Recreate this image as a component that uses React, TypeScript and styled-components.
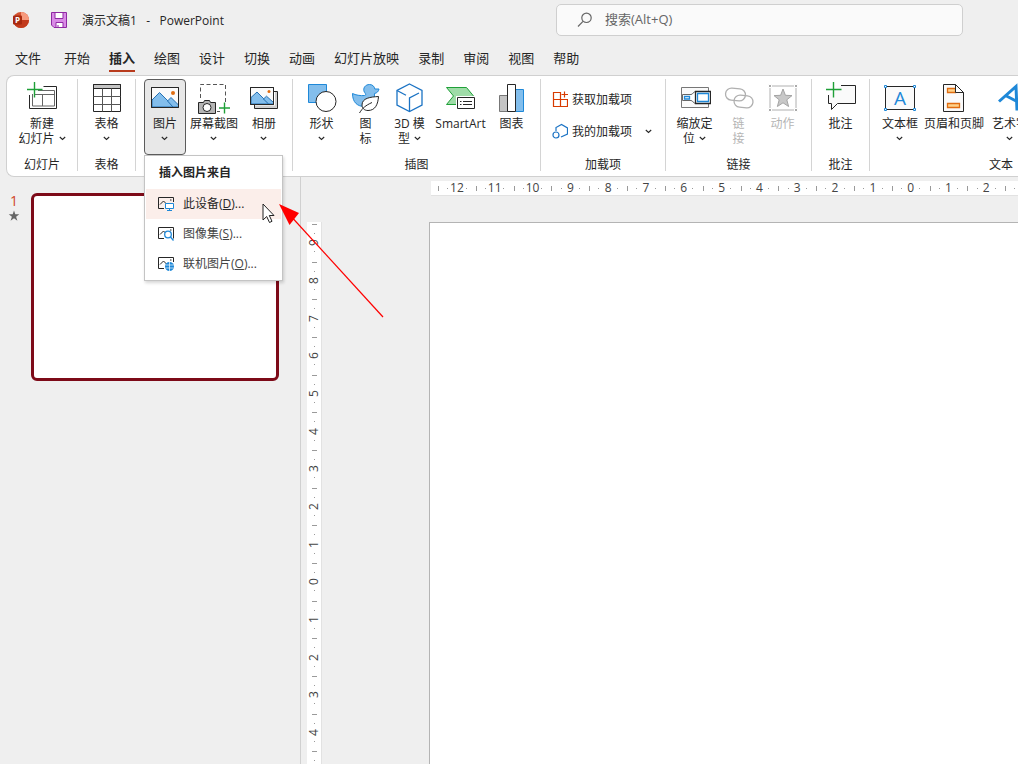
import React from "react";
import styled, { createGlobalStyle, css } from "styled-components";

const INK = "#262626";
const BLUE = "#1e88d8";
const SKY = "#83beec";
const DEEP = "#2470b3";
const GREEN = "#1fa038";
const ORANGE = "#e06c10";

const Global = createGlobalStyle`
  * { box-sizing: border-box; }
  body {
    margin: 0;
    background: #efefef;
    color: ${INK};
    font: 12px/15px "Open Sans", "Noto Sans CJK SC", sans-serif;
    overflow: hidden;
  }
  button, input { font: inherit; color: inherit; }
  button { background: none; border: 0; padding: 0; }
  svg { display: block; flex: none; }
`;

const Window = styled.div`
  display: flex;
  flex-direction: column;
  height: 100vh;
  overflow: hidden;
`;

/* Title bar */
const TitleBar = styled.header`
  display: flex;
  align-items: center;
  height: 40px;
  padding: 0 55px 0 12px;
`;
const SaveButton = styled.button`
  margin: 0 15px 0 21px;
`;
const DocTitle = styled.h1`
  margin: 0;
  font-size: 12px;
  font-weight: 400;
  white-space: pre;
`;
const Search = styled.label`
  display: flex;
  align-items: center;
  gap: 12px;
  flex: 0 0 407px;
  height: 32px;
  margin-left: auto;
  padding: 0 20px;
  border: 1px solid #cfcfcf;
  border-radius: 5px;
  background: #fafafa;
`;
const SearchInput = styled.input`
  flex: 1;
  border: 0;
  outline: 0;
  background: none;
  font-size: 13px;
  padding: 0 0 2px;
  &::placeholder { color: #666; opacity: 1; }
`;

/* Tabs */
const Tabs = styled.nav`
  display: flex;
  gap: 19px;
  height: 35px;
  padding: 9px 15px 0;
`;
const Tab = styled.button<{ $active?: boolean; $first?: boolean }>`
  height: 23px;
  font-size: 13px;
  line-height: 18px;
  padding-bottom: 3px;
  white-space: nowrap;
  margin-right: ${(p) => (p.$first ? 4 : 0)}px;
  border-bottom: 2px solid ${(p) => (p.$active ? "#b83b1d" : "transparent")};
  font-weight: ${(p) => (p.$active ? 700 : 400)};
`;

/* Ribbon */
const Ribbon = styled.section`
  display: flex;
  flex: none;
  height: 102px;
  margin-left: 6px;
  border: 1px solid #d0d0d0;
  border-right: 0;
  border-radius: 8px 0 0 8px;
  background: #fff;
`;
const Group = styled.section<{ $width: number; $last?: boolean }>`
  display: flex;
  flex-direction: column;
  align-items: center;
  flex: ${(p) => (p.$last ? 1 : 0)} 0 ${(p) => p.$width}px;
  margin: 3px 0 5px;
  border-right: ${(p) => (p.$last ? 0 : 1)}px solid #d4d4d4;
`;
const Tools = styled.div<{ $start?: boolean }>`
  display: flex;
  flex: none;
  height: 76px;
  align-self: ${(p) => (p.$start ? "flex-start" : "center")};
  padding-left: ${(p) => (p.$start ? 8 : 0)}px;
`;
const GroupName = styled.h2`
  margin: 1px 0 0;
  font-size: 12px;
  font-weight: 400;
  line-height: 17px;
`;
const ToolButton = styled.button<{ $width: number; $open?: boolean }>`
  display: flex;
  flex-direction: column;
  align-items: center;
  width: ${(p) => p.$width}px;
  height: 76px;
  padding-top: 2px;
  border: 1px solid transparent;
  border-radius: 4px;
  white-space: nowrap;
  ${(p) =>
    p.$open &&
    css`
      background: #e8e8e8;
      border-color: #5c5c5c;
    `}
  &:disabled { color: #b5b5b5; }
`;
const ToolLabel = styled.span`
  margin-top: 2px;
`;
const LabelLine = styled.span`
  display: flex;
  align-items: center;
  justify-content: center;
  gap: 4px;
  height: 15px;
`;
const AddInList = styled.div`
  display: flex;
  flex-direction: column;
  flex: none;
  align-self: stretch;
  height: 76px;
  gap: 16px;
  padding: 12px 13px 0 11px;
`;
const AddInButton = styled.button`
  display: flex;
  align-items: center;
  gap: 4px;
  height: 16px;
  white-space: nowrap;
  & > :nth-child(3) { margin-left: auto; }
`;

/* Picture menu */
const MenuAnchor = styled.div`
  position: relative;
`;
const Menu = styled.div`
  position: absolute;
  z-index: 5;
  top: 76px;
  left: 0;
  width: 139px;
  padding: 1px;
  border: 1px solid #c4c4c4;
  background: #fff;
  box-shadow: 1px 2px 3px rgba(0, 0, 0, 0.16);
`;
const MenuTitle = styled.h3`
  margin: 0;
  padding-left: 13px;
  font-size: 12px;
  line-height: 32px;
`;
const MenuItem = styled.button<{ $hover?: boolean }>`
  display: flex;
  align-items: center;
  gap: 9px;
  width: 100%;
  height: 30px;
  padding: 0 0 2px 12px;
  white-space: nowrap;
  color: ${(p) => (p.$hover ? INK : "#444")};
  background: ${(p) => (p.$hover ? "#fbeeea" : "none")};
`;
const Pointer = styled.svg`
  position: absolute;
  z-index: 6;
  top: 47px;
  left: 117px;
`;
const Callout = styled.svg`
  position: absolute;
  z-index: 7;
  top: 47px;
  left: 133px;
  pointer-events: none;
`;

/* Workspace */
const Workspace = styled.main`
  display: flex;
  flex: 1;
  min-height: 0;
`;
const SlidePane = styled.aside`
  display: flex;
  flex: 0 0 301px;
  gap: 11px;
  align-items: flex-start;
  padding: 16px 21px 0 8px;
  border-right: 1px solid #d0d0d0;
`;
const SlideMark = styled.div`
  display: flex;
  flex-direction: column;
  align-items: center;
  width: 12px;
  gap: 2px;
  color: #d04525;
  font-size: 14px;
`;
const Thumbnail = styled.button`
  flex: 1;
  aspect-ratio: 248 / 188;
  border: 3px solid #7d0a18;
  border-radius: 6px;
  background: #fff;
`;
const Editor = styled.div`
  display: grid;
  flex: 1;
  min-width: 0;
  grid-template-columns: 15px minmax(0, 1fr);
  grid-template-rows: 15px minmax(0, 1fr);
  gap: 26px 107px;
  padding: 4px 0 0 6px;
`;
const RulerTop = styled.div`
  grid-column: 2;
  margin-left: 2px;
  padding-left: 7px;
  background: #fff;
  border-bottom: 1px solid #e2e2e2;
`;
const ScaleTop = styled.div`
  display: grid;
  grid-template-columns: repeat(16, 1fr);
  width: 605px;
`;
const mark = "linear-gradient(#9a9a9a, #9a9a9a)";
const UnitTop = styled.span`
  height: 14px;
  text-align: center;
  line-height: 14px;
  color: #444;
  background: ${mark} 0 5px / 1px 5px, ${mark} 25% 7px / 1px 1px, ${mark} 75% 7px / 1px 1px;
  background-repeat: no-repeat;
`;
const RulerSide = styled.div`
  min-height: 0;
  background: #fff;
  border-right: 1px solid #e2e2e2;
`;
const ScaleSide = styled.div`
  display: grid;
  grid-template-rows: repeat(15, 1fr);
  height: 567px;
  padding-top: 2px;
`;
const UnitSide = styled.span`
  display: flex;
  align-items: center;
  justify-content: center;
  width: 14px;
  color: #444;
  background: ${mark} 5px 0 / 5px 1px, ${mark} 7px 25% / 1px 1px, ${mark} 7px 75% / 1px 1px;
  background-repeat: no-repeat;
`;
const Upright = styled.span`
  writing-mode: sideways-lr;
  line-height: 14px;
`;
const Slide = styled.section`
  border: solid #b4b4b4;
  border-width: 1px 0 0 1px;
  background: #fff;
`;

/* Icons */
const Caret = () => (
  <svg width="7" height="5" viewBox="0 0 7 5" fill="none" stroke={INK} strokeWidth="1.1">
    <path d="M.8 1l2.7 2.5L6.2 1" />
  </svg>
);
const Glyph = ({ children, size = 32 }: { children: React.ReactNode; size?: number }) => (
  <svg width={size} height={size} viewBox={`0 0 ${size} ${size}`} fill="none" stroke={INK} aria-hidden="true">
    {children}
  </svg>
);
const LogoIcon = () => (
  <svg width="18" height="18" viewBox="0 0 18 18" aria-hidden="true">
    <circle cx="9" cy="9" r="8" fill="#d35230" />
    <path d="M9 1a8 8 0 018 8H9z" fill="#f79a7d" />
    <path d="M1 9h16a8 8 0 01-16 0z" fill="#c23a1c" />
    <rect x="1" y="4.500" width="9" height="9" rx="1" fill="#a8290f" />
    <text x="3" y="12" fontSize="8" fontWeight="700" fill="#fff" fontFamily="Open Sans">P</text>
  </svg>
);
const SaveIcon = () => (
  <Glyph size={16}>
    <path d="M.5.5h15v15H3L.5 13z" fill="#d98be6" stroke="#8f2aa3" />
    <path d="M4 .5h8v6H4zM5 10.500h7v5H5z" fill="#fff" stroke="#8f2aa3" />
    <path d="M7 13v2.500" stroke="#8f2aa3" />
  </Glyph>
);
const SearchIcon = () => (
  <Glyph size={16}>
    <g stroke="#666" strokeWidth="1.2">
      <circle cx="9.500" cy="5.800" r="4.700" />
      <path d="M6 9.300L1 14.500" />
    </g>
  </Glyph>
);
const NewSlideIcon = () => (
  <Glyph>
    <path d="M17.500 4.500h13v22h-27V13" />
    <path d="M12 8.500h16.500v15.500h-22V12M8 12.500h20.500M16.500 12.500V24" stroke="#666" />
    <path d="M8.500 0v15.500M1 7.500h15.500" stroke={GREEN} strokeWidth="1.4" />
  </Glyph>
);
const TableIcon = () => (
  <Glyph>
    <path d="M2.500 2.500h27v4h-27z" fill="#c4c4c4" />
    <path d="M2.500 2.500h27v27h-27zM2.500 6.500h27" />
    <path d="M2.500 14.500h27M2.500 22.500h27M11.500 6.500v23M20.500 6.500v23" stroke="#555" />
  </Glyph>
);
const PictureIcon = () => (
  <Glyph>
    <path d="M2.500 5.500h27v20h-27z" fill="#fafafa" />
    <path d="M3 18l7.500-7.500L25 25H3z" fill={SKY} stroke={DEEP} />
    <path d="M18.500 19l3.500-3.500 7.500 7.500v2H24z" fill={SKY} stroke={DEEP} />
    <circle cx="24" cy="11" r="2" fill={ORANGE} stroke="none" />
    <path d="M2.500 5.500h27v20h-27z" />
  </Glyph>
);
const ScreenshotIcon = () => (
  <Glyph>
    <path d="M2.500 16V2.500h25v18M19 29.500h3" stroke="#555" strokeDasharray="4 2.500" />
    <path d="M.5 20.500h5l1-2h5l1 2h5v11H.5z" fill="#b5b5b5" />
    <circle cx="9" cy="25.500" r="4" fill="#fff" />
    <path d="M26.500 20.500v11M21 26h11" stroke={GREEN} strokeWidth="1.4" />
  </Glyph>
);
const AlbumIcon = () => (
  <Glyph>
    <path d="M6.500 23v3.500h23v-17H26" />
    <path d="M7 23.500h20V10h2v16H7z" fill="#d0d0d0" stroke="none" />
    <path d="M2.500 5.500h23v17h-23z" fill="#fafafa" />
    <path d="M3 15.500L9 10l12 12H3z" fill={SKY} stroke={DEEP} />
    <path d="M15.500 17l3-2.800 7 6.300V22h-5z" fill={SKY} stroke={DEEP} />
    <circle cx="21" cy="9.500" r="1.500" fill={ORANGE} stroke="none" />
    <path d="M2.500 5.500h23v17h-23z" />
  </Glyph>
);
const ShapesIcon = () => (
  <Glyph>
    <path d="M2.500 2.500h18v18h-18z" fill={SKY} stroke={BLUE} />
    <circle cx="20" cy="19.500" r="10" fill="#fff" />
  </Glyph>
);
const IconsIcon = () => (
  <Glyph>
    <path
      d="M2.500 11.500c3 1.500 8 2.500 12 2 2-.3 1-2-.2-3.500C12.500 6 15.500 2.500 19.500 2.500c3 0 5 2 5.300 4.500h4.200c-.5 2.500-2 4-4.500 4.500-.5 2 1 4 0 7-1 3.500-5 6-10 6-7 0-12-4-12-13z"
      fill={SKY}
      stroke={BLUE}
    />
    <path d="M28.500 14.500c-8 .5-16.500 1.500-16.500 8.500 0 3.500 2.500 5.500 6 5.500 7.500 0 10-6.500 10.500-14z" fill="#fff" />
    <path d="M9.500 31c3-5 6-7.500 12.500-10.500" />
  </Glyph>
);
const CubeIcon = () => (
  <Glyph>
    <g stroke="#1b73c4" strokeWidth="1.300">
      <path d="M15.500 2L28 8.500v14.500L15.500 29.500 3 23V8.500z" />
      <path d="M3 8.500l9 4.800M25 11l-9.500 5v13.500" />
    </g>
  </Glyph>
);
const SmartArtIcon = () => (
  <Glyph>
    <path d="M1.500 5.500h20l7 8.500-7 8.500h-20l7-8.500z" fill="#9fdca8" stroke={GREEN} />
    <path d="M11 14h20v14H11z" fill="#fff" stroke="none" />
    <path d="M12.500 15.500h17v11h-17z" fill="#fff" />
    <path d="M15 19.500h1.500M18 19.500h9M15 22.500h1.500M18 22.500h9" />
  </Glyph>
);
const ChartIcon = () => (
  <Glyph>
    <path d="M3.500 13.500h8v16h-8z" fill="#c4c4c4" stroke="#777" />
    <path d="M19.500 7.500h8v22h-8z" fill={SKY} stroke={BLUE} />
    <path d="M11.500 2.500h8v27h-8z" fill="#fff" />
  </Glyph>
);
const GetAddInsIcon = () => (
  <Glyph size={16}>
    <path d="M8.500 8.500V1.500h-7v14h14v-7h-14M8.500 8.500v7M12.500.5v6M9.500 3.500h6.500" stroke="#d83b01" strokeWidth="1.200" />
  </Glyph>
);
const MyAddInsIcon = () => (
  <Glyph size={16}>
    <g stroke="#1b73c4" strokeWidth="1.200">
      <path d="M4 8V4.500L9.500 1.500l6 3.500v6L9 14" />
      <circle cx="4" cy="12" r="3" />
    </g>
  </Glyph>
);
const ZoomIcon = () => (
  <Glyph>
    <path d="M2.500 5.500h27v20h-27z" fill="#fafafa" stroke="#777" />
    <path d="M3.500 12.500h8.500c2 0 2.500-3 4.500-3v12c-2 0-2.500-3-4.500-3H3.500z" fill="#fff" stroke="#666" />
    <path d="M16.500 9.500h15v12h-15z" fill="#fff" strokeWidth="1.300" />
    <path d="M5.500 14.500h5v2.500h-5zM18.500 11.500h11v8h-11z" stroke={BLUE} strokeWidth="1.300" />
  </Glyph>
);
const LinkIcon = () => (
  <Glyph>
    <g stroke="#b0b0b0" strokeWidth="1.300">
      <rect x="2.500" y="6.500" width="20" height="12" rx="6" transform="rotate(5 12.500 12.500)" />
      <rect x="11" y="13.500" width="19" height="12" rx="6" transform="rotate(5 20.500 19.500)" />
    </g>
  </Glyph>
);
const ActionIcon = () => (
  <Glyph>
    <path d="M3 4h26v24H3z" stroke="#b0b0b0" />
    <path d="M1.500 2.500h3v3h-3zM27.500 2.500h3v3h-3zM1.500 26.500h3v3h-3zM27.500 26.500h3v3h-3z" fill="#aaa" stroke="#fff" />
    <path d="M16 7l2.400 6.300 6.600.3-5.200 4.200 1.800 6.700L16 20.800l-5.600 3.700 1.800-6.700L7 13.600l6.600-.3z" fill="#c8c8c8" stroke="#a4a4a4" />
  </Glyph>
);
const CommentIcon = () => (
  <Glyph>
    <path d="M16 3.500h14.500v18h-18L6.500 27.500v-6h-3V13" fill="#fafafa" />
    <path d="M8.500 0v15.500M1 7.500h15.500" stroke={GREEN} strokeWidth="1.400" />
  </Glyph>
);
const TextBoxIcon = () => (
  <Glyph>
    <path d="M1.500 4.500h29v23h-29z" fill="#fafafa" />
    <g fill="#fff" stroke={BLUE}>
      <path d="M.5 3.500h2v2h-2zM29.500 3.500h2v2h-2zM.5 26.500h2v2h-2zM29.500 26.500h2v2h-2z" />
    </g>
    <text x="16" y="23" textAnchor="middle" fontSize="19" fill={BLUE} stroke="none">A</text>
  </Glyph>
);
const HeaderFooterIcon = () => (
  <Glyph>
    <path d="M5.500 2.500h12l8 8v19h-20z" fill="#fafafa" />
    <path d="M9.500 6.500h8v4h-8zM9.500 21.500h12v4h-12z" fill="#ffd28a" stroke={ORANGE} strokeWidth="1.300" />
    <path d="M17.500 2.500v8h8z" fill="#fff" />
  </Glyph>
);
const WordArtIcon = () => (
  <Glyph>
    <path d="M5 19.500L22 4.500l1 24M11.500 13.500L23 19.500" stroke={BLUE} strokeWidth="3" />
  </Glyph>
);
const PhotoFrame = () => <path d="M6 13.500H.5v-11h15V7M2 9.500L5.500 6 9 9.500M12 5h1.500" />;
const DeviceIcon = () => (
  <Glyph size={16}>
    <PhotoFrame />
    <path d="M7.500 8.500h8v5h-8zM9 15.500h5M11.500 13.500v2" fill="#fff" stroke={BLUE} />
  </Glyph>
);
const StockIcon = () => (
  <Glyph size={16}>
    <PhotoFrame />
    <path d="M15.500 6v7.500" />
    <circle cx="10" cy="9.500" r="3.300" fill="#fff" stroke={BLUE} strokeWidth="1.300" />
    <path d="M12.500 12l3 3.500" stroke={BLUE} strokeWidth="1.300" />
  </Glyph>
);
const OnlineIcon = () => (
  <Glyph size={16}>
    <PhotoFrame />
    <circle cx="11.500" cy="11.500" r="4.500" fill={BLUE} stroke="none" />
    <path d="M7.500 10h8M7.500 13h8M11.500 7v9" stroke="#fff" strokeWidth=".7" />
  </Glyph>
);

type ToolProps = {
  icon: React.ReactNode;
  lines: string[];
  width: number;
  caret?: "below" | "inline";
  open?: boolean;
  disabled?: boolean;
};
const Tool = ({ icon, lines, width, caret, open, disabled }: ToolProps) => (
  <ToolButton $width={width} $open={open} disabled={disabled}>
    {icon}
    <ToolLabel>
      {lines.map((line, i) => (
        <LabelLine key={line}>
          {line}
          {caret === "inline" && i === lines.length - 1 && <Caret />}
        </LabelLine>
      ))}
      {caret === "below" && (
        <LabelLine>
          <Caret />
        </LabelLine>
      )}
    </ToolLabel>
  </ToolButton>
);

const TABS = ["文件", "开始", "插入", "绘图", "设计", "切换", "动画", "幻灯片放映", "录制", "审阅", "视图", "帮助"];
const TOP_UNITS = [12, 11, 10, 9, 8, 7, 6, 5, 4, 3, 2, 1, 0, 1, 2, null];
const SIDE_UNITS = [9, 8, 7, 6, 5, 4, 3, 2, 1, 0, 1, 2, 3, 4, null];
const SOURCES = [
  { name: "此设备", accessKey: "D", icon: <DeviceIcon /> },
  { name: "图像集", accessKey: "S", icon: <StockIcon /> },
  { name: "联机图片", accessKey: "O", icon: <OnlineIcon /> },
];

export default function App() {
  return (
    <Window>
      <Global />
      <TitleBar>
        <LogoIcon />
        <SaveButton aria-label="保存">
          <SaveIcon />
        </SaveButton>
        <DocTitle>演示文稿1{"   -   "}PowerPoint</DocTitle>
        <Search>
          <SearchIcon />
          <SearchInput type="text" placeholder="搜索(Alt+Q)" aria-label="搜索" />
        </Search>
      </TitleBar>
      <Tabs>
        {TABS.map((name, i) => (
          <Tab key={name} $first={i === 0} $active={name === "插入"}>
            {name}
          </Tab>
        ))}
      </Tabs>
      <Ribbon>
        <Group $width={71}>
          <Tools>
            <Tool icon={<NewSlideIcon />} lines={["新建", "幻灯片"]} width={60} caret="inline" />
          </Tools>
          <GroupName>幻灯片</GroupName>
        </Group>
        <Group $width={58}>
          <Tools>
            <Tool icon={<TableIcon />} lines={["表格"]} width={44} caret="below" />
          </Tools>
          <GroupName>表格</GroupName>
        </Group>
        <Group $width={157}>
          <Tools $start>
            <MenuAnchor>
              <Tool icon={<PictureIcon />} lines={["图片"]} width={42} caret="below" open />
              <Menu>
                <MenuTitle>插入图片来自</MenuTitle>
                {SOURCES.map((s) => (
                  <MenuItem key={s.accessKey} $hover={s.accessKey === "D"}>
                    {s.icon}
                    <span>
                      {s.name}(<u>{s.accessKey}</u>)...
                    </span>
                  </MenuItem>
                ))}
                <Pointer width="14" height="21" viewBox="0 0 14 21" aria-hidden="true">
                  <path d="M1 1v16l3.700-3.500L7.500 19.500l2.500-1.200-2.700-5.800H12z" fill="#fff" stroke="#222" />
                </Pointer>
                <Callout width="108" height="116" viewBox="0 0 108 116" aria-hidden="true">
                  <path d="M10 10L105 114" stroke="#ff0000" strokeWidth="1.200" />
                  <path d="M1 1l20 9-9.500 12z" fill="#ff0000" />
                </Callout>
              </Menu>
            </MenuAnchor>
            <Tool icon={<ScreenshotIcon />} lines={["屏幕截图"]} width={56} caret="below" />
            <Tool icon={<AlbumIcon />} lines={["相册"]} width={44} caret="below" />
          </Tools>
        </Group>
        <Group $width={248}>
          <Tools>
            <Tool icon={<ShapesIcon />} lines={["形状"]} width={44} caret="below" />
            <Tool icon={<IconsIcon />} lines={["图", "标"]} width={44} />
            <Tool icon={<CubeIcon />} lines={["3D 模", "型"]} width={44} caret="inline" />
            <Tool icon={<SmartArtIcon />} lines={["SmartArt"]} width={58} />
            <Tool icon={<ChartIcon />} lines={["图表"]} width={44} />
          </Tools>
          <GroupName>插图</GroupName>
        </Group>
        <Group $width={125}>
          <AddInList>
            <AddInButton>
              <GetAddInsIcon />
              <span>获取加载项</span>
            </AddInButton>
            <AddInButton>
              <MyAddInsIcon />
              <span>我的加载项</span>
              <Caret />
            </AddInButton>
          </AddInList>
          <GroupName>加载项</GroupName>
        </Group>
        <Group $width={146}>
          <Tools>
            <Tool icon={<ZoomIcon />} lines={["缩放定", "位"]} width={44} caret="inline" />
            <Tool icon={<LinkIcon />} lines={["链", "接"]} width={44} disabled />
            <Tool icon={<ActionIcon />} lines={["动作"]} width={44} disabled />
          </Tools>
          <GroupName>链接</GroupName>
        </Group>
        <Group $width={58}>
          <Tools>
            <Tool icon={<CommentIcon />} lines={["批注"]} width={44} />
          </Tools>
          <GroupName>批注</GroupName>
        </Group>
        <Group $width={262} $last>
          <Tools $start>
            <Tool icon={<TextBoxIcon />} lines={["文本框"]} width={44} caret="below" />
            <Tool icon={<HeaderFooterIcon />} lines={["页眉和页脚"]} width={64} />
            <Tool icon={<WordArtIcon />} lines={["艺术字"]} width={48} caret="below" />
          </Tools>
          <GroupName>文本</GroupName>
        </Group>
      </Ribbon>
      <Workspace>
        <SlidePane>
          <SlideMark>
            1
            <svg width="12" height="12" viewBox="0 0 12 12" aria-hidden="true">
              <path d="M6 .5l1.300 3.800h4L8.100 6.700l1.300 4L6 8.300l-3.400 2.400 1.300-4L.7 4.300h4z" fill="#666" />
            </svg>
          </SlideMark>
          <Thumbnail aria-label="幻灯片 1" />
        </SlidePane>
        <Editor>
          <RulerTop>
            <ScaleTop>
              {TOP_UNITS.map((n, i) => (
                <UnitTop key={i}>{n}</UnitTop>
              ))}
            </ScaleTop>
          </RulerTop>
          <RulerSide>
            <ScaleSide>
              {SIDE_UNITS.map((n, i) => (
                <UnitSide key={i}>{n !== null && <Upright>{n}</Upright>}</UnitSide>
              ))}
            </ScaleSide>
          </RulerSide>
          <Slide />
        </Editor>
      </Workspace>
    </Window>
  );
}
